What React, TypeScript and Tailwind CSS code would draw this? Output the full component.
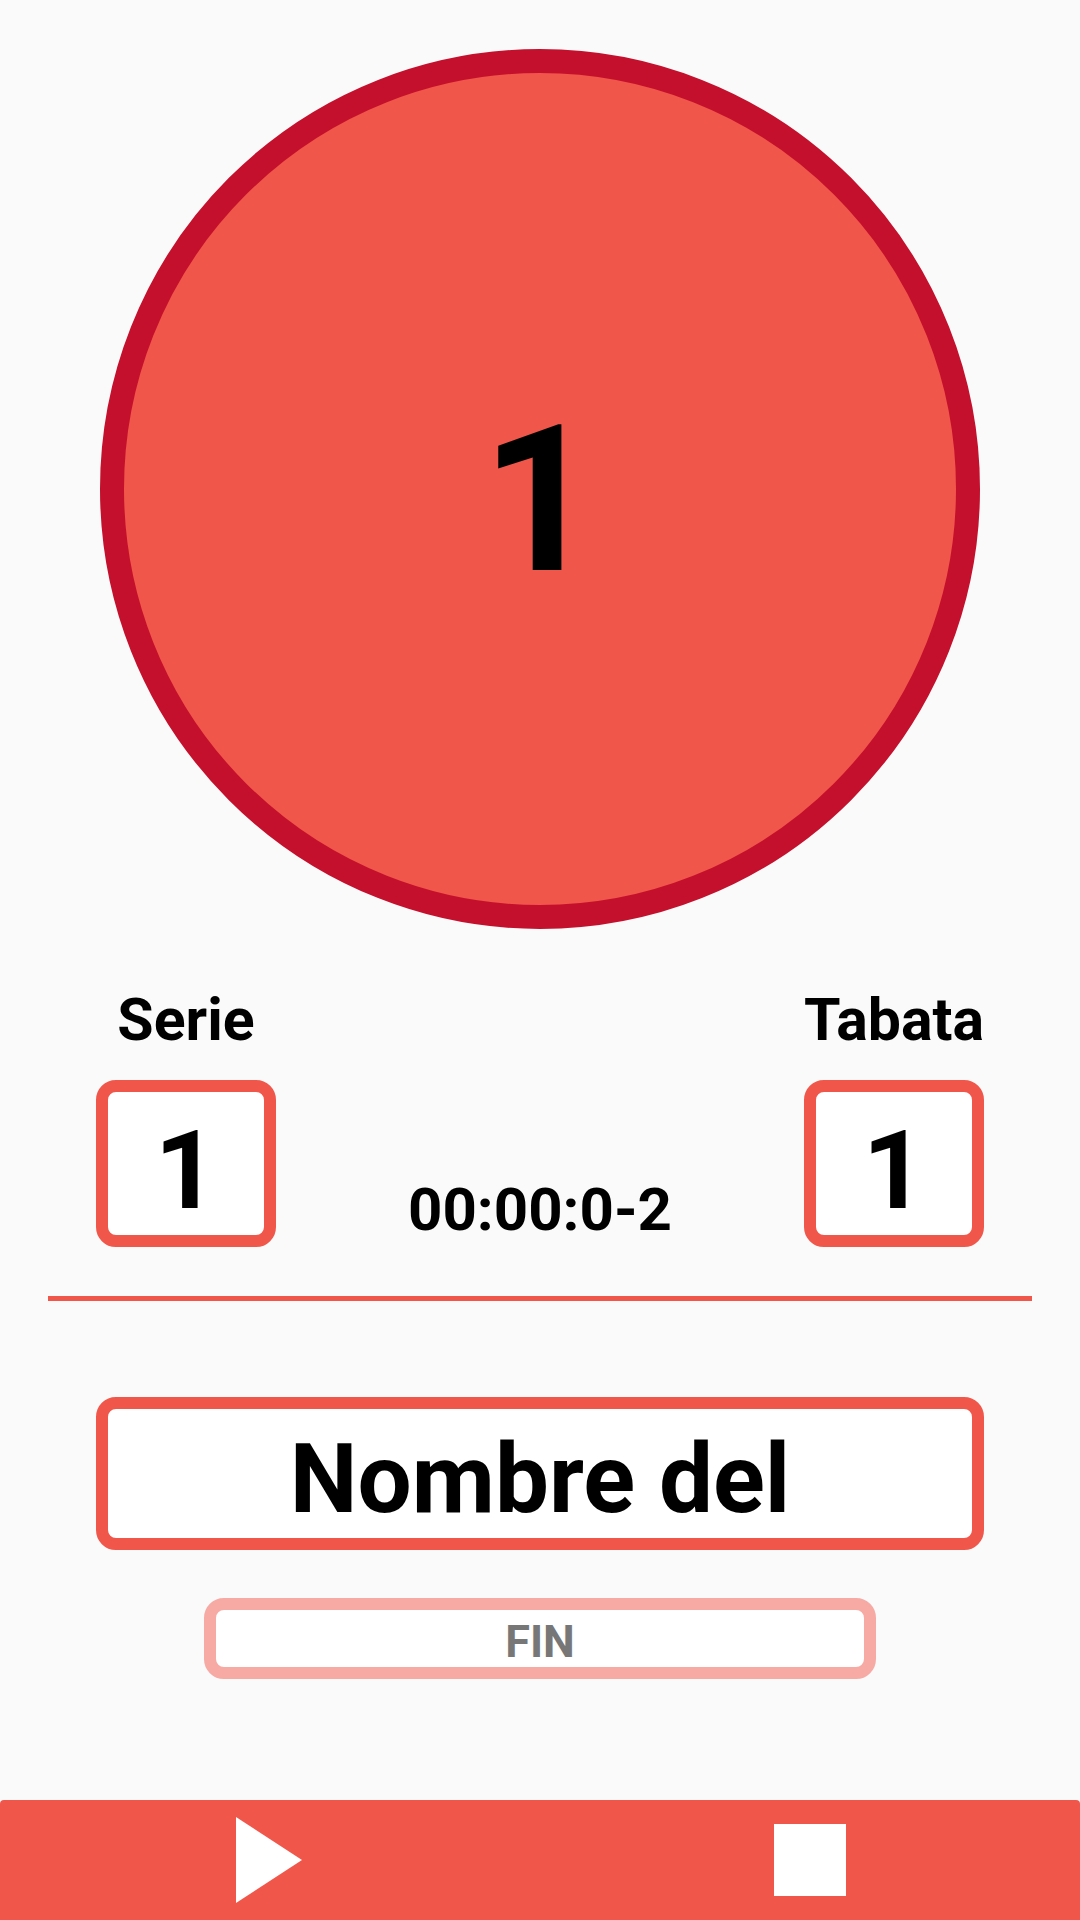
import React from "react";

const RED = "border-[#f1564a]";

function Counter({ label, value }: { label: string; value: number }) {
  return (
    <div className="flex w-[180px] flex-col items-center">
      <span className="text-[59px] font-bold leading-none text-black">{label}</span>
      <div
        className={`mt-[31px] flex h-[167px] w-[180px] items-center justify-center rounded-[20px] border-[12px] ${RED} bg-white`}
      >
        <span className="mt-[14px] text-[110px] font-bold leading-none text-black">{value}</span>
      </div>
    </div>
  );
}

export default function App() {
  return (
    <div
      className="flex h-[1920px] w-[1080px] flex-col bg-[#fafafa]"
      style={{ fontFamily: "Roboto, 'Noto Sans', sans-serif" }}
    >
      <div className="flex justify-center pt-[49px]">
        <div className="flex h-[880px] w-[880px] items-center justify-center rounded-full border-[24px] border-[#c4102c] bg-[#f1564a]">
          <span className="mt-[24px] text-[204px] font-bold leading-none text-black">1</span>
        </div>
      </div>

      <div className="mt-[61px] flex px-[96px]">
        <Counter label="Serie" value={1} />
        <div className="flex flex-1 items-end justify-center pb-[7px]">
          <span className="text-[60px] font-bold leading-none text-black">00:00:0-2</span>
        </div>
        <Counter label="Tabata" value={1} />
      </div>

      <div className="mx-[48px] mt-[49px] h-[5px] bg-[#f1564a]" />

      <div
        className={`mx-[96px] mt-[96px] flex h-[153px] items-center justify-center rounded-[20px] border-[12px] ${RED} bg-white`}
      >
        <span className="mt-[10px] text-[96px] font-bold leading-none text-black">Nombre del</span>
      </div>

      <div className="mt-[48px] flex justify-center">
        <button className="flex h-[81px] w-[672px] items-center justify-center rounded-[20px] border-[12px] border-[#f7aaa3] bg-white">
          <span className="mt-[5px] text-[45px] font-bold leading-none text-[#777777]">FIN</span>
        </button>
      </div>

      <div className="mt-auto flex h-[120px] rounded-t-[4px] bg-[#f1564a]">
        <button className="flex flex-1 items-center justify-center">
          <svg width="66" height="86" viewBox="0 0 66 86" className="ml-[-3px]">
            <polygon points="0,0 66,43 0,86" fill="#ffffff" />
          </svg>
        </button>
        <button className="flex flex-1 items-center justify-center">
          <div className="h-[72px] w-[72px] bg-white" />
        </button>
      </div>
    </div>
  );
}
